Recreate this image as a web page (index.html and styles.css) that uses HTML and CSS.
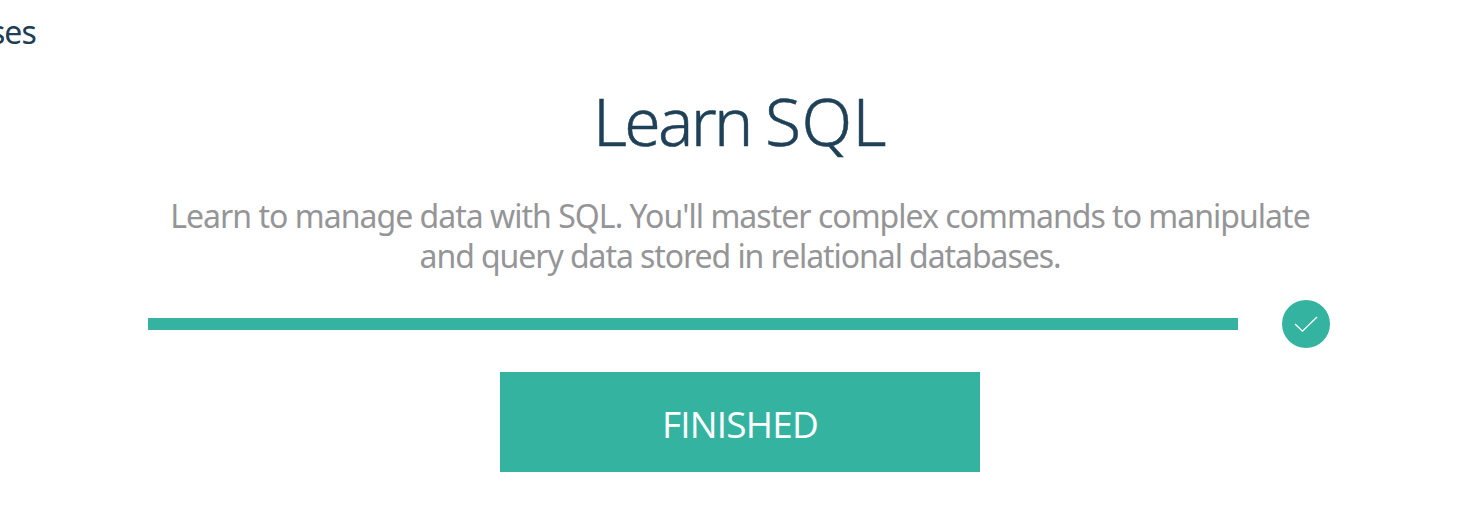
FILE: index.html
```html
<!DOCTYPE html>
<html lang="en">
<head>
<meta charset="utf-8">
<title>Learn SQL</title>
<link rel="stylesheet" href="styles.css">
</head>
<body>
<nav class="crumb"><span class="crumb-text">ses</span></nav>
<main class="course">
<h1 class="title">Learn <span class="title-topic">SQL</span></h1>
<p class="summary"><span class="line line-one">Learn to manage data with SQL. You'll master complex commands to manipulate</span><span class="line line-two">and query data stored in relational databases.</span></p>
<div class="progress">
<div class="bar"></div>
<div class="badge"><svg class="check" viewBox="0 0 48 48"><path d="M13 24L20.5 31.2L35 17"/></svg></div>
</div>
<a class="button">FINISHED</a>
</main>
</body>
</html>
```
FILE: styles.css
```css
* { box-sizing: border-box; }
body { margin: 0; height: 522px; overflow: hidden; background: #fff; font-family: "Noto Sans", "Open Sans", sans-serif; }
.crumb { height: 66px; padding-top: 12px; overflow: hidden; color: #1e3d56; font-size: 32px; line-height: 40px; }
.crumb-text { display: block; margin-left: -10px; letter-spacing: -1px; }
.course { display: flex; flex-direction: column; align-items: center; }
.title { margin: 9px 0 0 2px; height: 90px; color: #1f4158; font-size: 66px; font-weight: 350; line-height: 90px; letter-spacing: -2.7px; -webkit-text-stroke: .5px #1f4158; }
.title-topic { letter-spacing: .4px; }
.summary { margin: 31px 0 0 2px; color: #959598; font-size: 32px; line-height: 40px; }
.line { display: block; text-align: center; white-space: nowrap; }
.line-one { letter-spacing: -.98px; }
.line-two { letter-spacing: -1.07px; }
.progress { display: flex; align-items: center; justify-content: space-between; width: 1182px; height: 48px; margin-top: 24px; }
.bar { width: 1090px; height: 12px; background: #35b3a1; }
.badge { width: 48px; height: 48px; border-radius: 50%; background: #35b3a1; }
.check { display: block; fill: none; stroke: #fff; stroke-width: 1.3; }
.button { width: 480px; height: 100px; margin: 24px 0 0 2px; background: #35b3a1; color: #fff; text-align: center; font-family: "Open Sans", sans-serif; font-size: 37px; line-height: 104px; letter-spacing: -.8px; }
```
